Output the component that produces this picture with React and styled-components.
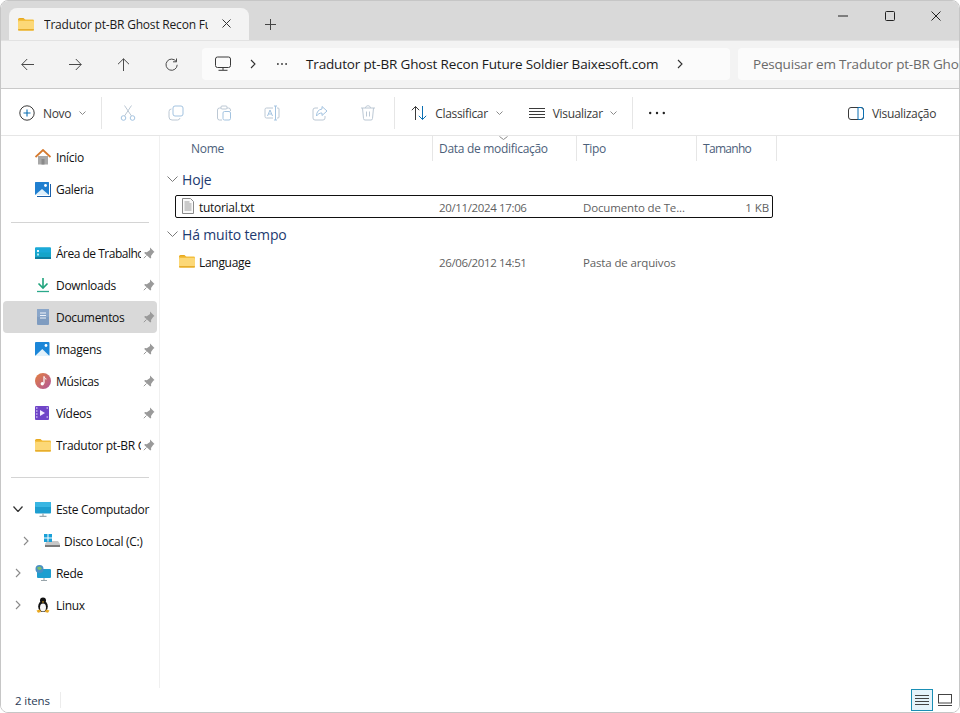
import React from 'react';
import styled, { createGlobalStyle } from 'styled-components';

const Global = createGlobalStyle`
  html, body { margin: 0; padding: 0; background: #fff; }
  body { font-family: "Open Sans", "Noto Sans", "Liberation Sans", sans-serif; }
  * { box-sizing: border-box; }
`;

const Win = styled.div`
  width: 960px; height: 713px; display: flex; flex-direction: column; position: relative;
  border: 1px solid #c6c6c6; border-radius: 8px; overflow: hidden; background: #fff;
`;
const TitleBar = styled.div`
  height: 39px; background: #d9d9d9; display: flex; align-items: flex-end; padding-left: 8px; position: relative; flex: none;
`;
const Tab = styled.div`
  width: 240px; height: 32px; background: #f3f3f3; border-radius: 8px 8px 0 0; display: flex; align-items: center; padding-left: 9px;
`;
const TabTitle = styled.span`
  width: 164px; margin-left: 10px; font-size: 12px; color: #1a1a1a; white-space: nowrap; overflow: hidden; letter-spacing: -0.2px;
`;
const TabClose = styled.span`
  margin-left: 14px; margin-bottom: 2px; display: flex;
`;
const NewTab = styled.span`
  margin-left: 16px; margin-bottom: 10px; display: flex;
`;
const WinControls = styled.div`
  position: absolute; right: 0; top: 0; height: 30px; display: flex;
`;
const WinBtn = styled.span`
  width: 46px; height: 30px; display: flex; align-items: center; justify-content: center;
  margin-right: ${p => p.$mr ?? 0}px;
`;
const NavBar = styled.div`
  height: 49px; flex: none; background: #f3f3f3; border-top: 1px solid #e2e2e2; border-bottom: 1px solid #c9c9c9; display: flex; align-items: center; padding-bottom: 1px;
`;
const NavBtn = styled.span`
  width: 48px; height: 32px; display: flex; align-items: center; justify-content: center; flex: none;
  margin-left: ${p => p.$first ? '2px' : '0'};
`;
const AddressBar = styled.div`
  width: 528px; height: 32px; margin-left: 7px; background: #fbfbfb; border-radius: 4px; display: flex; align-items: center; flex: none; padding-left: 13px;
`;
const AddressText = styled.span`
  font-size: 13.5px; color: #1a1a1a; white-space: nowrap; margin-left: 19px; letter-spacing: -0.16px;
`;
const AddrSlot = styled.span`
  display: flex; margin-left: ${p => p.$ml}px;
`;
const SearchBox = styled.div`
  flex: 1; height: 32px; margin-left: 8px; background: #fbfbfb; border-radius: 4px 0 0 4px; padding-left: 15px; font-size: 13.5px; letter-spacing: -0.2px; line-height: 32px; color: #6a6a6a; white-space: nowrap; overflow: hidden;
`;
const Toolbar = styled.div`
  height: 47px; flex: none; background: #fff; border-bottom: 1px solid #e6e6e6; display: flex; align-items: center; position: relative; padding-top: 2px;
`;
const ToolLabel = styled.span`
  font-size: 12px; color: #3a3a3a; letter-spacing: -0.32px; white-space: nowrap; margin-left: ${p => p.$ml ?? 8}px;
`;
const ToolButton = styled.span`
  display: flex; align-items: center; flex: none; margin-left: ${p => p.$ml}px;
`;
const DisabledTool = styled.span`
  width: 48px; height: 32px; display: flex; align-items: center; justify-content: center; flex: none;
`;
const ToolSep = styled.span`
  width: 1px; height: 32px; background: #e6e6e6; flex: none; margin-left: ${p => p.$ml}px;
`;
const PreviewButton = styled.span`
  position: absolute; left: 847px; top: 1px; height: 46px; display: flex; align-items: center;
`;
const Body = styled.div`
  flex: 1; display: flex; min-height: 0;
`;
const Sidebar = styled.nav`
  width: 159px; flex: none; border-right: 1px solid #f0f0f0; padding-top: 5px; height: 552px;
`;
const NavItem = styled.div`
  position: relative; height: 32px; margin-left: 2px; width: 154px; border-radius: 4px; display: flex; align-items: center;
  background: ${p => p.$active ? '#d9d9d9' : 'transparent'};
`;
const NavIconSlot = styled.span`
  position: absolute; left: ${p => p.$left ?? 32}px; top: 8px; width: 16px; height: 16px; display: flex;
`;
const NavLabel = styled.span`
  position: absolute; left: ${p => p.$left ?? 53}px; width: ${p => p.$w ?? 85}px; font-size: 12px; letter-spacing: ${p => p.$tight ? '-0.5px' : '-0.3px'}; color: #111; white-space: nowrap; overflow: hidden;
`;
const NavPin = styled.span`
  position: absolute; left: 140px; top: 10px; display: flex;
`;
const NavChevron = styled.span`
  position: absolute; left: ${p => p.$left}px; top: ${p => p.$top ?? 11}px; display: flex;
`;
const NavDivider = styled.div`
  height: 1px; width: 138px; margin-left: 10px; background: #d4d4d4; margin-top: ${p => p.$mt}px; margin-bottom: ${p => p.$mb}px;
`;
const Content = styled.main`
  flex: 1; position: relative;
`;
const HeaderRow = styled.div`
  display: flex; height: 25px; position: relative; width: 617px;
`;
const HeaderCell = styled.div`
  width: ${p => p.$w}px; flex: none; border-right: 1px solid #e6e6e6; font-size: 12px; letter-spacing: ${p => p.$tight ? '-0.7px' : '-0.3px'}; line-height: 25px; color: #4c607a; padding-left: ${p => p.$pl ?? 6}px;
`;
const SortMark = styled.span`
  position: absolute; left: 339px; top: 0; display: flex;
`;
const GroupHeader = styled.div`
  display: flex; align-items: center; height: 22px; margin-top: ${p => p.$mt}px; color: #1d3a70; font-size: 14px; letter-spacing: -0.15px; padding-left: 7px;
`;
const GroupLabel = styled.span`
  margin-left: 4px;
`;
const FileRow = styled.div`
  display: flex; align-items: center; position: relative; height: 23px; width: 598px; margin-left: 15px; margin-top: ${p => p.$mt}px; padding-top: 2px;
  border: 1px solid ${p => p.$focus ? '#111' : 'transparent'}; border-radius: 2px;
`;
const FileIcon = styled.span`
  position: absolute; left: ${p => p.$left ?? 4}px; top: 2px; display: flex;
`;
const FileName = styled.span`
  position: absolute; left: 23px; font-size: 12px; letter-spacing: -0.3px; color: #111; white-space: nowrap;
`;
const FileMeta = styled.span`
  position: absolute; left: ${p => p.$left}px; font-size: 11.5px; letter-spacing: ${p => p.$tight ? '-0.36px' : '-0.14px'}; color: #5f5f5f; white-space: nowrap;
`;
const FileSize = styled.span`
  position: absolute; right: 3px; font-size: 11.5px; letter-spacing: -0.1px; color: #5f5f5f;
`;
const StatusBar = styled.div`
  position: absolute; left: 0; right: 0; bottom: 0; height: 24px; display: flex; align-items: center; background: #fff;
`;
const StatusText = styled.span`
  font-size: 11.5px; color: #2a3a55; margin-left: 14px; letter-spacing: -0.1px;
`;
const StatusSep = styled.span`
  width: 1px; height: 16px; background: #ececec; margin-left: 10px;
`;
const ViewButton = styled.span`
  position: absolute; left: ${p => p.$left}px; top: 1px; width: 22px; height: 22px; display: flex; align-items: center; justify-content: center;
  ${p => p.$on ? 'background: #e5f3fb; border: 1px solid #1a8fb5;' : ''}
`;

const S = ({ w = 16, h, children, vb, ...r }) => (
  <svg width={w} height={h ?? w} viewBox={vb ?? `0 0 ${w} ${h ?? w}`} fill="none" {...r}>{children}</svg>
);
const line = '#4a4a4a';
const off = '#a3c3e0';
const offG = '#bcc8d4';

const Back = () => <S w={13} vb="0 0 13 13"><path d="M13 6.500H.8M6.200 1L.8 6.500 6.200 12" stroke={line} /></S>;
const Fwd = () => <S w={13} vb="0 0 13 13"><path d="M0 6.500h12.200M6.800 1l5.400 5.500L6.800 12" stroke={line} /></S>;
const Up = () => <S w={13} vb="0 0 13 13"><path d="M6.500 13V.8M1 6.200L6.500.8 12 6.200" stroke={line} /></S>;
const Refresh = () => <S w={13} vb="0 0 13 13"><path d="M11.200 3.500A5.600 5.600 0 1 0 12.200 6.800" stroke={line} /><path d="M8 3.800h3.500V.5" stroke={line} /></S>;
const X = ({ s = 11, c = '#333' }) => <S w={s}><path d={`M.5 .5L${s - .5} ${s - .5}M${s - .5} .5L.5 ${s - .5}`} stroke={c} /></S>;
const Plus = () => <S w={11}><path d="M5.500 0v11M0 5.500h11" stroke="#444" /></S>;
const ChevR = ({ c = '#333', w = 7, h = 10 }) => <S w={w} h={h}><path d={`M1 1l${w - 3} ${h / 2 - 1}-${w - 3} ${h / 2 - 1}`} stroke={c} strokeWidth="1.1" /></S>;
const ChevD = ({ c = '#8a8a8a', w = 7, h = 4, sw = 1 }) => <S w={w} h={h}><path d={`M.5 .5l${w / 2 - .5} ${h - 1} ${w / 2 - .5}-${h - 1}`} stroke={c} strokeWidth={sw} /></S>;
const Dots = ({ c = '#333', w = 12, r = .9 }) => <S w={w} h={4}><circle cx={r} cy="2" r={r} fill={c} /><circle cx={w / 2} cy="2" r={r} fill={c} /><circle cx={w - r} cy="2" r={r} fill={c} /></S>;
const Monitor = () => <S><rect x=".5" y="1" width="15" height="10.500" rx="2" stroke="#3a3a3a" /><path d="M8 11.500V14M3.500 14.300h9" stroke="#3a3a3a" /></S>;

const Folder = ({ s = 16 }) => (
  <S w={s} vb="0 0 16 16">
    <path d="M0 3.500A1.500 1.500 0 0 1 1.500 2h4l2 2H0z" fill="#e8a91f" />
    <rect y="3.500" width="16" height="11" rx="1.200" fill="#f3bf3e" />
    <rect y="5" width="16" height="9.500" rx="1.200" fill="#fcd877" />
    <rect y="13" width="16" height="1.500" rx=".7" fill="#e6ad2e" />
  </S>
);
const PlusCircle = () => <S><circle cx="8" cy="8" r="7.200" stroke="#3a3a3a" /><path d="M8 4.500v7M4.500 8h7" stroke="#0b6fb2" strokeWidth="1.100" /></S>;
const Cut = () => <S><circle cx="3.500" cy="13" r="2.300" stroke={off} /><circle cx="12.500" cy="13" r="2.300" stroke={off} /><path d="M4.500 11L11.500 .5M11.500 11L4.500 .5" stroke={offG} /></S>;
const Copy = () => <S><rect x="5" y="1" width="10" height="10" rx="2" stroke={off} /><path d="M3.500 4A2.500 2.500 0 0 0 1 6.500V12a3 3 0 0 0 3 3h5.500a2.500 2.500 0 0 0 2.500-2" stroke={offG} /></S>;
const Paste = () => <S><path d="M5 3H3.500A2 2 0 0 0 1.500 5v8a2 2 0 0 0 2 2H6M11 3h1.500a2 2 0 0 1 2 2v1" stroke={offG} /><rect x="5" y="1" width="6" height="3" rx="1" stroke={offG} /><rect x="7" y="6.500" width="7.500" height="8.500" rx="1.500" stroke={off} /></S>;
const Rename = () => <S><path d="M9 3H2.500A1.500 1.500 0 0 0 1 4.500v7A1.500 1.500 0 0 0 2.500 13H9M13 3h1a1 1 0 0 1 1 1v8a1 1 0 0 1-1 1h-1" stroke={offG} /><path d="M10 1h3M11.500 1v14M10 15h3" stroke={off} /><path d="M3.500 11l2.500-6 2.500 6M4.500 9h3" stroke={off} /></S>;
const Share = () => <S><path d="M6 3H3a2 2 0 0 0-2 2v8a2 2 0 0 0 2 2h8a2 2 0 0 0 2-2v-2" stroke={offG} /><path d="M10 1.500l5 4.500-5 4.500V8C7.500 8 6 9 4.500 11c0-4 2-6.500 5.500-7z" stroke={off} /></S>;
const Trash = () => <S><path d="M1 3h14M5.500 3c0-3 5-3 5 0M2.500 3l1 10.500a1.500 1.500 0 0 0 1.500 1.500h6a1.500 1.500 0 0 0 1.500-1.500l1-10.500" stroke={offG} /><path d="M6.500 6.500v5M9.500 6.500v5" stroke={offG} /></S>;
const Sort = () => <S><path d="M4.500 15V1.500M.8 5.200l3.700-3.700 3.700 3.700" stroke="#3a3a3a" /><path d="M11.500 1v13.500M7.800 10.800l3.700 3.700 3.700-3.700" stroke="#0b6fb2" /></S>;
const Lines = ({ w = 16, c = '#3a3a3a' }) => <S w={w} h={10}><path d={`M0 .5h${w}M0 3.500h${w}M0 6.500h${w}M0 9.500h${w}`} stroke={c} /></S>;
const Preview = () => <S w={16} h={13}><rect x=".5" y=".5" width="15" height="12" rx="2.500" stroke="#3a3a3a" /><path d="M10 .5v12" stroke="#0b6fb2" /><path d="M10 .5h3a2.500 2.500 0 0 1 2.500 2.500v7a2.500 2.500 0 0 1-2.500 2.500h-3" stroke="#0b6fb2" /></S>;

const Pin = () => <S w={12} h={12}><path d="M7 .5l4.500 4.500-1.200.7-2.300 3.200.2 1.800-.9.800L1.200 6l.8-.9 1.800.2 3.200-2.300z" fill="#9a9a9a" /><path d="M3.500 8.500L.8 11.200" stroke="#9a9a9a" /></S>;

const Home = () => <S><rect x="3" y="7" width="10" height="8.500" fill="#a8a8a8" /><rect x="6.500" y="10" width="3" height="5.500" fill="#8a8a8a" /><path d="M.5 8L8 1l7.500 7" stroke="#d67a2e" strokeWidth="1.800" /></S>;
const Gallery = () => <S><rect x="0" y="1" width="14" height="13" rx=".5" fill="#1f7fd0" /><path d="M15 3h1v13H2v-1h13z" fill="#1a5fa8" /><path d="M0 14l7-6 7 6z" fill="#dff0fb" /><circle cx="10.500" cy="4.500" r="1.400" fill="#fff" /></S>;
const Desktop = () => <S><rect y="2.500" width="16" height="11.500" rx="1" fill="#15a4c9" /><rect y="2.500" width="16" height="5" rx="1" fill="#1ba9d8" /><rect x="2" y="5" width="2" height="2" fill="#e6f7fc" /><rect x="2" y="8.500" width="2" height="2" fill="#b3e6f2" /><rect y="12" width="16" height="2" fill="#0f7ea0" /></S>;
const Download = () => <S><path d="M8 1v9.500" stroke="#1fa37c" strokeWidth="1.600" /><path d="M3.500 6.500L8 11l4.500-4.500" stroke="#1fa37c" strokeWidth="1.600" /><path d="M2 14.500h12" stroke="#2aa98a" strokeWidth="1.300" /></S>;
const Doc = () => <S><rect x="2" y="0" width="12" height="16" rx="1" fill="#7f9cc0" /><rect x="2" y="0" width="12" height="8" rx="1" fill="#8aa6c9" /><path d="M5 4h6M5 6.500h6M5 9h6" stroke="#f0f4fa" /></S>;
const Image = () => <S><rect y="1" width="14.500" height="14" rx="1" fill="#1b86d8" /><path d="M0 15l7.300-7 7.200 7z" fill="#e3f2fb" /><circle cx="11" cy="4.500" r="1.400" fill="#fff" /></S>;
const Music = () => <S><defs><linearGradient id="mg" x1="0" y1="0" x2="1" y2="1"><stop offset="0" stopColor="#e4803e" /><stop offset="1" stopColor="#b0559c" /></linearGradient></defs><circle cx="8" cy="8" r="8" fill="url(#mg)" /><path d="M9 3.500v7" stroke="#fff" strokeWidth="1.200" /><circle cx="7.300" cy="10.800" r="1.700" fill="#fff" /><path d="M9 3.500c.5 1.500 2 1.500 2 3" stroke="#fff" /></S>;
const Video = () => <S><rect y="1" width="14" height="14" rx="1" fill="#6f45c8" /><path d="M5 5l5 3-5 3z" fill="#f2ecff" /><path d="M1 3h1.500M1 6h1.500M1 9h1.500M1 12h1.500M11.500 3H13M11.500 12H13" stroke="#f0e8ff" /></S>;
const Computer = () => <S><rect y="1" width="16" height="11.500" rx="1" fill="#1e9ed0" /><rect y="1" width="16" height="5" rx="1" fill="#39b6e3" /><path d="M8 12.500v2.500M4.500 15.300h7" stroke="#9aa7ad" strokeWidth="1.200" /></S>;
const Disk = () => <S><path d="M1 11l2-3h11l2 3v3H1z" fill="#c8c8c8" /><rect x="1" y="12" width="15" height="2" fill="#7c7c7c" /><rect x="0" y="1" width="3.500" height="3.500" fill="#19a0d8" /><rect x="4.500" y="1" width="3.500" height="3.500" fill="#19a0d8" /><rect x="0" y="5.500" width="3.500" height="3.500" fill="#19a0d8" /><rect x="4.500" y="5.500" width="3.500" height="3.500" fill="#19a0d8" /></S>;
const Net = () => <S><rect x="2" y="4" width="14" height="9" rx="1" fill="#1e9ed0" /><path d="M9 13v2.500M6 15.500h6" stroke="#98a4aa" strokeWidth="1.100" /><circle cx="4.500" cy="4" r="4" fill="#4a90c4" /><path d="M2 2.500l3-1 2 2-2 1.500-2-.5z" fill="#7fc06a" /></S>;
const Tux = () => <S><ellipse cx="8" cy="9.500" rx="4.800" ry="5.500" fill="#111" /><circle cx="8" cy="3.500" r="3" fill="#111" /><ellipse cx="8" cy="10.500" rx="3" ry="4" fill="#f6f6f6" /><path d="M6.800 4.500h2.400L8 6z" fill="#f0b429" /><path d="M1.500 13.500l3.500-1 1 2.500-3 .7zM14.500 13.500l-3.500-1-1 2.500 3 .7z" fill="#e9a820" /></S>;
const TextFile = () => <S w={16} h={16}><path d="M2.500.5h8l3 3v12h-11z" fill="#fafafa" stroke="#8a8a8a" /><path d="M4.500 4h5M4.500 6h7M4.500 8h7M4.500 10h7M4.500 12h7" stroke="#9a9a9a" /></S>;
const ThumbView = () => <S w={14} h={12}><rect x=".5" y=".5" width="13" height="8.500" stroke="#444" /><path d="M0 11.500h14" stroke="#444" /></S>;

const pinned = [
  ['Área de Trabalho', Desktop, false, true], ['Downloads', Download], ['Documentos', Doc, true],
  ['Imagens', Image], ['Músicas', Music], ['Vídeos', Video], ['Tradutor pt-BR Ghost Recon', Folder],
];

export default function App() {
  return (
    <>
      <Global />
      <Win>
        <TitleBar>
          <Tab>
            <Folder />
            <TabTitle>Tradutor pt-BR Ghost Recon Future Soldier</TabTitle>
            <TabClose><X s={9} /></TabClose>
          </Tab>
          <NewTab><Plus /></NewTab>
          <WinControls>
            <WinBtn $mr={1}><S w={10} h={2}><path d="M0 1h10" stroke="#222" /></S></WinBtn>
            <WinBtn><S w={10}><rect x=".5" y=".5" width="9" height="9" rx="1" stroke="#222" /></S></WinBtn>
            <WinBtn><X s={10} c="#222" /></WinBtn>
          </WinControls>
        </TitleBar>
        <NavBar>
          <NavBtn $first><Back /></NavBtn>
          <NavBtn><Fwd /></NavBtn>
          <NavBtn><Up /></NavBtn>
          <NavBtn><Refresh /></NavBtn>
          <AddressBar>
            <Monitor />
            <AddrSlot $ml={19}><ChevR /></AddrSlot>
            <AddrSlot $ml={20}><Dots w={10} /></AddrSlot>
            <AddressText>Tradutor pt-BR Ghost Recon Future Soldier Baixesoft.com</AddressText>
            <AddrSlot $ml={19}><ChevR /></AddrSlot>
          </AddressBar>
          <SearchBox>Pesquisar em Tradutor pt-BR Ghost Recon Future Soldier</SearchBox>
        </NavBar>
        <Toolbar>
          <ToolButton $ml={18}><PlusCircle /><ToolLabel>Novo</ToolLabel><ToolButton $ml={8}><ChevD /></ToolButton></ToolButton>
          <ToolSep $ml={15} />
          <ToolButton $ml={2}>
            <DisabledTool><Cut /></DisabledTool>
            <DisabledTool><Copy /></DisabledTool>
            <DisabledTool><Paste /></DisabledTool>
            <DisabledTool><Rename /></DisabledTool>
            <DisabledTool><Share /></DisabledTool>
            <DisabledTool><Trash /></DisabledTool>
          </ToolButton>
          <ToolSep $ml={2} />
          <ToolButton $ml={16}><Sort /><ToolLabel>Classificar</ToolLabel><ToolButton $ml={8}><ChevD /></ToolButton></ToolButton>
          <ToolButton $ml={26}><Lines /><ToolLabel>Visualizar</ToolLabel><ToolButton $ml={7}><ChevD /></ToolButton></ToolButton>
          <ToolSep $ml={15} />
          <ToolButton $ml={16}><Dots w={16} r={1.200} c="#222" /></ToolButton>
          <PreviewButton><Preview /><ToolLabel>Visualização</ToolLabel></PreviewButton>
        </Toolbar>
        <Body>
          <Sidebar>
            <NavItem><NavIconSlot><Home /></NavIconSlot><NavLabel>Início</NavLabel></NavItem>
            <NavItem><NavIconSlot><Gallery /></NavIconSlot><NavLabel>Galeria</NavLabel></NavItem>
            <NavDivider $mt={17} $mb={14} />
            {pinned.map(([label, I, active, tight]) => (
              <NavItem key={label} $active={active}>
                <NavIconSlot><I /></NavIconSlot>
                <NavLabel $tight={tight}>{label}</NavLabel>
                <NavPin><Pin /></NavPin>
              </NavItem>
            ))}
            <NavDivider $mt={16} $mb={15} />
            <NavItem><NavChevron $left={10} $top={13}><ChevD c="#333" w={10} h={6} sw={1.300} /></NavChevron><NavIconSlot><Computer /></NavIconSlot><NavLabel $w={100}>Este Computador</NavLabel></NavItem>
            <NavItem><NavChevron $left={20}><ChevR c="#8a8a8a" /></NavChevron><NavIconSlot $left={41}><Disk /></NavIconSlot><NavLabel $left={61} $w={90}>Disco Local (C:)</NavLabel></NavItem>
            <NavItem><NavChevron $left={12}><ChevR c="#8a8a8a" /></NavChevron><NavIconSlot><Net /></NavIconSlot><NavLabel>Rede</NavLabel></NavItem>
            <NavItem><NavChevron $left={12}><ChevR c="#8a8a8a" /></NavChevron><NavIconSlot><Tux /></NavIconSlot><NavLabel>Linux</NavLabel></NavItem>
          </Sidebar>
          <Content>
            <HeaderRow>
              <HeaderCell $w={273} $pl={31}>Nome</HeaderCell>
              <HeaderCell $w={144}>Data de modificação</HeaderCell>
              <HeaderCell $w={120}>Tipo</HeaderCell>
              <HeaderCell $w={80} $tight>Tamanho</HeaderCell>
              <SortMark><ChevD w={9} h={4} /></SortMark>
            </HeaderRow>
            <GroupHeader $mt={7}><ChevD c="#7b7b7b" w={11} h={6} /><GroupLabel>Hoje</GroupLabel></GroupHeader>
            <FileRow $focus $mt={5}>
              <FileIcon><TextFile /></FileIcon>
              <FileName>tutorial.txt</FileName>
              <FileMeta $left={263} $tight>20/11/2024 17:06</FileMeta>
              <FileMeta $left={407}>Documento de Te...</FileMeta>
              <FileSize>1 KB</FileSize>
            </FileRow>
            <GroupHeader $mt={5}><ChevD c="#7b7b7b" w={11} h={6} /><GroupLabel>Há muito tempo</GroupLabel></GroupHeader>
            <FileRow $mt={5}>
              <FileIcon $left={3}><Folder /></FileIcon>
              <FileName>Language</FileName>
              <FileMeta $left={263} $tight>26/06/2012 14:51</FileMeta>
              <FileMeta $left={407}>Pasta de arquivos</FileMeta>
            </FileRow>
          </Content>
        </Body>
        <StatusBar>
          <StatusText>2 itens</StatusText>
          <StatusSep />
          <ViewButton $left={910} $on><Lines w={14} c="#444" /></ViewButton>
          <ViewButton $left={933}><ThumbView /></ViewButton>
        </StatusBar>
      </Win>
    </>
  );
}
